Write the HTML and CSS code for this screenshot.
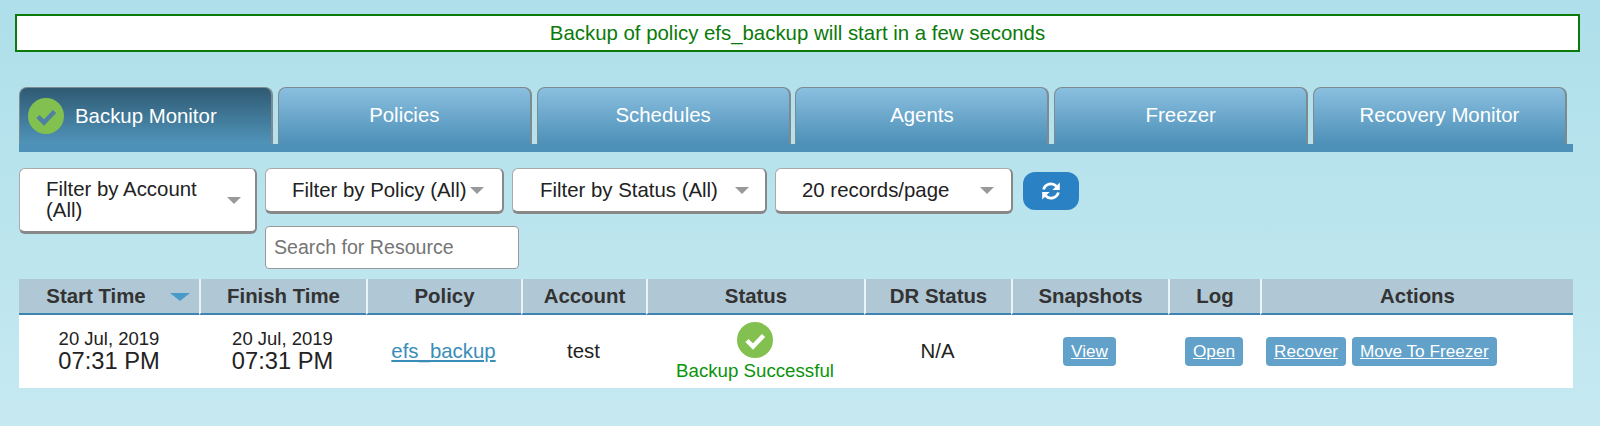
FILE: index.html
```html
<!DOCTYPE html>
<html lang="en">
<head>
  <meta charset="UTF-8" />
  <title>Backup Monitor</title>
  <link rel="stylesheet" href="styles.css">
</head>
<body>
  <div class="banner">Backup of policy efs_backup will start in a few seconds</div>

  <div class="tabs">
    <a class="tab active">
      <svg class="tab-check" viewBox="0 0 36 36"><circle cx="18" cy="18" r="18" fill="#82c050"/><path d="M10 18.500l6 6 10.500-11" fill="none" stroke="#4f7fa3" stroke-width="4.500"/></svg>
      Backup Monitor
    </a>
    <a class="tab">Policies</a>
    <a class="tab">Schedules</a>
    <a class="tab">Agents</a>
    <a class="tab">Freezer</a>
    <a class="tab">Recovery Monitor</a>
  </div>

  <div class="filters">
    <div class="select select-account"><span>Filter by Account (All)</span><i class="caret"></i></div>
    <div class="filter-stack">
      <div class="select select-policy"><span>Filter by Policy (All)</span><i class="caret"></i></div>
      <input class="search" type="text" placeholder="Search for Resource">
    </div>
    <div class="select select-status"><span>Filter by Status (All)</span><i class="caret"></i></div>
    <div class="select select-records"><span>20 records/page</span><i class="caret"></i></div>
    <button class="refresh">
      <svg viewBox="0 0 24 24" width="24" height="24"><path d="M4.600 10.500A7.600 7.600 0 0 1 17.400 7.200" fill="none" stroke="#fff" stroke-width="2.800"/><path d="M20.800 3.600v7.400h-7.400z" fill="#fff"/><path d="M19.400 13.500A7.600 7.600 0 0 1 6.600 16.800" fill="none" stroke="#fff" stroke-width="2.800"/><path d="M3.200 20.400v-7.400h7.400z" fill="#fff"/></svg>
    </button>
  </div>

  <table class="jobs">
    <thead>
      <tr>
        <th class="col-start">Start Time<i class="sort"></i></th>
        <th class="col-finish">Finish Time</th>
        <th class="col-policy">Policy</th>
        <th class="col-account">Account</th>
        <th class="col-status">Status</th>
        <th class="col-dr">DR Status</th>
        <th class="col-snap">Snapshots</th>
        <th class="col-log">Log</th>
        <th>Actions</th>
      </tr>
    </thead>
    <tbody>
      <tr>
        <td><div class="date">20 Jul, 2019</div><div class="time">07:31 PM</div></td>
        <td><div class="date">20 Jul, 2019</div><div class="time">07:31 PM</div></td>
        <td><a class="policy-link">efs_backup</a></td>
        <td>test</td>
        <td>
          <svg class="status-check" viewBox="0 0 36 36"><circle cx="18" cy="18" r="18" fill="#82c050"/><path d="M10 18.500l6 6 10.500-11" fill="none" stroke="#fff" stroke-width="4.500"/></svg>
          <div class="status-text">Backup Successful</div>
        </td>
        <td>N/A</td>
        <td><a class="btn">View</a></td>
        <td><a class="btn">Open</a></td>
        <td class="actions"><a class="btn">Recover</a><a class="btn">Move To Freezer</a></td>
      </tr>
    </tbody>
  </table>
</body>
</html>
```
FILE: styles.css
```css
html, body {
  margin: 0;
  padding: 0;
  height: 100%;
}

body {
  box-sizing: border-box;
  padding: 14px 20px 0 15px;
  background: linear-gradient(#aedfea, #c6e9f1);
  font-family: "Liberation Sans", Arial, sans-serif;
  color: #222;
  overflow: hidden;
}

.banner {
  height: 34px;
  line-height: 34px;
  border: 2px solid #0a7a0a;
  background: #fff;
  color: #0a7a0a;
  font-size: 20.400px;
  text-align: center;
}

.tabs {
  display: flex;
  gap: 4.800px;
  margin: 35px 0 0 4px;
  height: 65px;
  border-bottom: 8px solid #4d90b8;
  box-sizing: border-box;
  width: 1554px;
}

.tab {
  flex: 0 0 254px;
  box-sizing: border-box;
  height: 57px;
  border: 1px solid #7d8a90;
  border-width: 1px 2px 0 1px;
  border-radius: 8px 8px 0 0;
  background: linear-gradient(#8abfdf, #4d90b8);
  color: #fff;
  font-size: 20.400px;
  line-height: 55px;
  text-align: center;
  display: block;
}

.tab.active {
  display: flex;
  align-items: center;
  padding-left: 8px;
  gap: 11px;
  background: linear-gradient(#2f5a72, #5094ba);
}

.tab-check {
  width: 36px;
  height: 36px;
}

.filters {
  display: flex;
  align-items: flex-start;
  gap: 8px;
  margin: 16px 0 0 4px;
}

.select {
  box-sizing: border-box;
  display: flex;
  align-items: center;
  justify-content: space-between;
  background: #fff;
  border: 1px solid #aaa;
  border-right: 2px solid #888;
  border-bottom: 3px solid #888;
  border-radius: 6px;
  height: 46px;
  font-size: 20.400px;
  line-height: 21px;
  color: #222;
}

.select-account {
  width: 238px;
  height: 66px;
  padding: 0 14px 0 26px;
}

.select-policy {
  width: 239px;
  padding: 0 18px 0 26px;
}

.select-status {
  width: 255px;
  padding: 0 16px 0 27px;
}

.select-records {
  width: 238px;
  padding: 0 17px 0 26px;
}

.caret {
  flex: none;
  width: 0;
  height: 0;
  border-left: 7px solid transparent;
  border-right: 7px solid transparent;
  border-top: 7px solid #999;
}

/* search is wider than the policy select and hangs out under the next one */
.filter-stack {
  display: flex;
  flex-direction: column;
  gap: 12px;
  width: 239px;
}

.search {
  box-sizing: border-box;
  width: 254px;
  height: 43px;
  padding: 0 8px;
  background: #fff;
  border: 1px solid #999;
  border-radius: 4px;
  font-family: inherit;
  font-size: 19.600px;
}

.search::placeholder {
  color: #757575;
  opacity: 1;
}

.refresh {
  width: 56px;
  height: 38px;
  margin: 4px 0 0 2px;
  padding: 0;
  border: none;
  border-radius: 12px;
  background: #2a82c4;
  display: flex;
  align-items: center;
  justify-content: center;
}

.jobs {
  width: 1554px;
  margin: 10px 0 0 4px;
  border-collapse: separate;
  border-spacing: 0;
  table-layout: fixed;
  background: #fff;
}

.jobs th {
  height: 34px;
  padding: 0;
  background: #b0c7d5;
  border-bottom: 2px solid #3d85b0;
  border-left: 2px solid #eaf4f7;
  font-size: 20.400px;
  color: #333;
  text-align: center;
}

.jobs th:first-child {
  border-left: none;
}

.col-start { width: 180px; position: relative; }
.col-finish { width: 165px; }
.col-policy { width: 153px; }
.col-account { width: 123px; }
.col-status { width: 216px; }
.col-dr { width: 145px; }
.col-snap { width: 155px; }
.col-log { width: 90px; }

.jobs th.col-start {
  padding-right: 26px;
  box-sizing: border-box;
}

.sort {
  position: absolute;
  top: 14px;
  right: 9px;
  width: 0;
  height: 0;
  border-left: 10px solid transparent;
  border-right: 10px solid transparent;
  border-top: 8px solid #4a9ac8;
}

.jobs td {
  height: 73px;
  padding: 0;
  text-align: center;
  font-size: 20.400px;
  color: #222;
}

.jobs td.actions {
  padding-left: 6px;
  text-align: left;
}

.date {
  font-size: 18.500px;
  line-height: 20px;
}

.time {
  font-size: 23.700px;
  line-height: 25px;
}

.policy-link {
  color: #3a8db8;
  text-decoration: underline;
}

.status-check {
  display: block;
  width: 36px;
  height: 36px;
  margin: 0 auto 3px;
}

.status-text {
  color: #0a930a;
  font-size: 18.700px;
  line-height: 20px;
}

.btn {
  display: inline-block;
  padding: 0 8px;
  height: 29px;
  line-height: 29px;
  background: #62a1c9;
  border-radius: 4px;
  color: #fff;
  font-size: 17.200px;
  text-decoration: underline;
}

.actions .btn + .btn {
  margin-left: 6px;
}
```
